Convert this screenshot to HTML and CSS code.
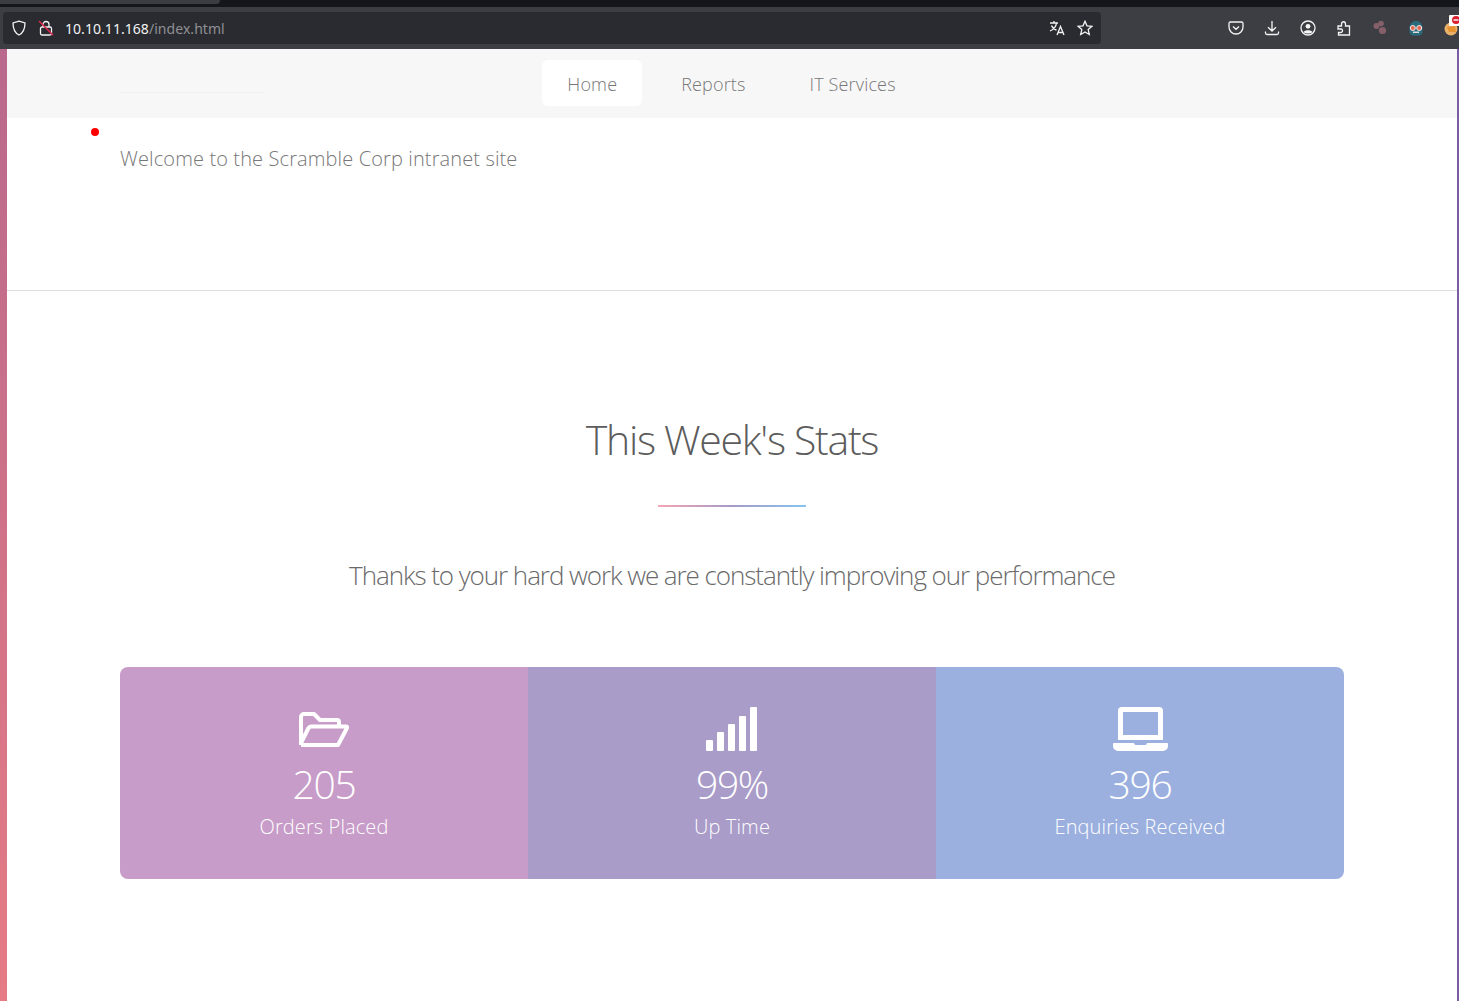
FILE: index.html
```html
<!DOCTYPE html>
<html lang="en">
<head>
  <meta charset="UTF-8">
  <title>Scramble Corp Intranet</title>
  <link rel="stylesheet" href="styles.css">
</head>
<body>
  <!-- Browser toolbar -->
  <div class="tabstrip"><div class="tab-edge"></div></div>
  <div class="toolbar">
    <div class="urlbar">
      <svg class="ico shield" viewBox="0 0 16 16"><path d="M8 1.2 L14 3 C14 9 12.5 12.8 8 15 C3.500 12.800 2 9 2 3 Z"/></svg>
      <svg class="ico lock" viewBox="0 0 16 16">
        <rect x="2.500" y="7" width="11" height="8" rx="1.500"/>
        <path d="M5 7 V4.500 a3 3 0 0 1 6 0 V7"/>
        <path class="slash" d="M1 1 L15 15"/>
      </svg>
      <span class="url"><span class="host">10.10.11.168</span>/index.html</span>
      <div class="url-actions">
        <svg class="ico" viewBox="0 0 16 16">
          <path d="M1 3 H9 M5 1 V3 M7.500 3 C7 7 4.500 9.500 1 11 M2.500 5.500 C3.500 8 5.500 9.500 7.500 10"/>
          <path d="M8 15 L11.500 6.500 L15 15 M9.200 12.500 H13.800"/>
        </svg>
        <svg class="ico star" viewBox="0 0 16 16"><path d="M8 1.300 L10 5.800 L14.900 6.300 L11.200 9.600 L12.300 14.500 L8 12 L3.700 14.500 L4.800 9.600 L1.100 6.300 L6 5.800 Z"/></svg>
      </div>
    </div>
    <div class="tools">
      <svg class="ico" viewBox="0 0 16 16"><path d="M2.500 2 H13.500 a1.500 1.500 0 0 1 1.500 1.500 V7 a7 7 0 0 1 -14 0 V3.500 A1.500 1.500 0 0 1 2.500 2 Z M5 6.500 L8 9.300 L11 6.500"/></svg>
      <svg class="ico" viewBox="0 0 16 16"><path d="M8 1 V11 M4 7.300 L8 11 L12 7.300 M1.500 11.500 V13 a1.500 1.500 0 0 0 1.500 1.500 H13 a1.500 1.500 0 0 0 1.500 -1.500 V11.500"/></svg>
      <svg class="ico" viewBox="0 0 16 16"><circle cx="8" cy="8" r="7"/><circle class="solid" cx="8" cy="6.300" r="2.400"/><path class="solid" d="M3.500 12 C5 9.800 11 9.800 12.500 12 C10.500 14 5.500 14 3.500 12 Z"/></svg>
      <svg class="ico" viewBox="0 0 16 16"><path d="M2 6 H5.500 V4 C5.500 1 9.500 1 9.500 4 V6 H13.500 V15 H2.500 V12.500 H5 C7 12.500 7 9 5 9 H2 Z"/></svg>
      <svg class="ext blobs" viewBox="0 0 16 16"><circle cx="4.500" cy="6" r="3"/><circle cx="9" cy="3.500" r="2.800"/><circle cx="10.500" cy="10.500" r="3.600"/></svg>
      <svg class="ext" viewBox="0 0 16 16">
        <path class="mask" d="M1.500 8 C1.500 -1.500 14.500 -1.500 14.500 8 V13 L12 15.500 H4 L1.500 13 Z"/>
        <circle class="goggle" cx="4.800" cy="8" r="2.500"/><circle class="goggle" cx="11.200" cy="8" r="2.500"/>
        <rect class="mouth" x="5" y="11.500" width="6" height="1.500"/>
      </svg>
      <svg class="ext fox" viewBox="0 0 16 16">
        <circle class="fox-body" cx="7" cy="9" r="6.500"/>
        <path class="fox-face" d="M3 7 L11 6 L12 12 L5 12 Z"/>
        <rect class="badge" x="5" y="-5" width="12" height="11" rx="1"/>
        <circle class="badge-stop" cx="12" cy="0" r="4"/>
        <rect class="badge" x="9.500" y="-0.700" width="5" height="1.400"/>
      </svg>
    </div>
  </div>

  <div class="viewport">
    <div class="page">
      <nav class="navbar">
        <div class="logo-broken"></div>
        <ul class="nav-links">
          <li class="active">Home</li>
          <li>Reports</li>
          <li>IT Services</li>
        </ul>
      </nav>

      <section class="intro">
        <span class="red-dot"></span>
        <p>Welcome to the Scramble Corp intranet site</p>
      </section>

      <section class="stats">
        <h2>This Week's Stats</h2>
        <div class="divider"></div>
        <p class="lead">Thanks to your hard work we are constantly improving our performance</p>
        <div class="cards">
          <div class="card card-pink">
            <svg class="card-icon" viewBox="0 0 52 36"><path class="line" d="M3 33 V5 a3 3 0 0 1 3 -3 H16 L22 8 H39 a2 2 0 0 1 2 2 V14 M3 33 H40 L49 16 a1 1 0 0 0 -1 -1.500 H13 a3 3 0 0 0 -2.500 1.500 L3 31"/></svg>
            <div class="num">205</div>
            <div class="label">Orders Placed</div>
          </div>
          <div class="card card-purple">
            <svg class="card-icon" viewBox="0 0 52 44"><rect x="0" y="33" width="7" height="11" rx="1"/><rect x="11" y="25" width="7" height="19" rx="1"/><rect x="22" y="17" width="7" height="27" rx="1"/><rect x="33" y="9" width="7" height="35" rx="1"/><rect x="44" y="0" width="7" height="44" rx="1"/></svg>
            <div class="num">99%</div>
            <div class="label">Up Time</div>
          </div>
          <div class="card card-blue">
            <svg class="card-icon" viewBox="0 0 55 44"><path fill-rule="evenodd" d="M9 0 H46 a4 4 0 0 1 4 4 V33 H5 V4 a4 4 0 0 1 4 -4 Z M10 5 V28 H45 V5 Z"/><path d="M1 36 H21 a2 2 0 0 0 2 2 H32 a2 2 0 0 0 2 -2 H54 a1 1 0 0 1 1 1 V39 a5 5 0 0 1 -5 5 H5 a5 5 0 0 1 -5 -5 V37 a1 1 0 0 1 1 -1 Z"/></svg>
            <div class="num">396</div>
            <div class="label">Enquiries Received</div>
          </div>
        </div>
      </section>
    </div>
  </div>
</body>
</html>
```

FILE: styles.css
```css
html, body {
  margin: 0;
  padding: 0;
}
body {
  width: 1459px;
  height: 1001px;
  overflow: hidden;
  background: #fff;
  font-family: "Open Sans", sans-serif;
  display: flex;
  flex-direction: column;
}

/* browser chrome */
.tabstrip {
  height: 7px;
  background: #15161c;
}
.tab-edge {
  width: 220px;
  height: 4px;
  background: #3c3d43;
  border-radius: 0 0 4px 0;
}
.toolbar {
  height: 42px;
  background: #3d3e44;
  display: flex;
  align-items: center;
  padding: 0 0 0 3px;
  box-sizing: border-box;
  overflow: hidden;
}
.urlbar {
  flex: none;
  width: 1098px;
  height: 32px;
  background: #2a2b30;
  border-radius: 4px;
  display: flex;
  align-items: center;
  box-sizing: border-box;
  padding: 0 8px 0 8px;
}
.ico {
  width: 16px;
  height: 16px;
  fill: none;
  stroke: #f4f4f5;
  stroke-width: 1.3;
  flex: none;
}
.ico .solid {
  fill: #f4f4f5;
  stroke: none;
}
.ico .slash {
  stroke: #e0254c;
  stroke-width: 1.500;
}
.lock {
  margin-left: 11px;
}
.url {
  margin-left: 11px;
  font-family: "Noto Sans", sans-serif;
  font-size: 14px;
  letter-spacing: 0.05px;
  color: #8f8f94;
}
.host {
  color: #f2f2f3;
}
.url-actions {
  margin-left: auto;
  display: flex;
  gap: 12px;
}
.tools {
  flex: none;
  margin-left: 127px;
  display: flex;
  align-items: center;
  gap: 20px;
}
.ext {
  width: 16px;
  height: 16px;
  flex: none;
  overflow: visible;
}
.blobs {
  filter: blur(0.5px);
}
.blobs circle {
  fill: #85606a;
}
.ext .mask {
  fill: #2b6c7c;
}
.ext .goggle {
  fill: #e8674f;
  stroke: #eee;
}
.ext .mouth {
  fill: #ddd;
}
.ext .fox-body {
  fill: #e8b26a;
}
.fox-face {
  fill: #e8912f;
}
.ext .badge-stop {
  fill: #d8202f;
}
.badge {
  fill: #fff;
}

/* page */
.viewport {
  flex: 1;
  display: flex;
  background: #fff;
  background-image: linear-gradient(180deg, #b9698c, #e67b85);
  padding: 0 2px 0 7px;
  position: relative;
  min-height: 0;
}
.viewport::after {
  content: "";
  position: absolute;
  top: 0;
  bottom: 0;
  right: 0;
  width: 2px;
  background: #7b5da6;
}
.page {
  flex: 1;
  background: #fff;
  color: #666;
  font-weight: 300;
}
.navbar {
  height: 69px;
  background: #f7f7f7;
  position: relative;
  display: flex;
  justify-content: center;
}
.logo-broken {
  position: absolute;
  left: 113px;
  top: 43px;
  width: 145px;
  height: 1px;
  background: #f0f1f2;
}
.nav-links {
  list-style: none;
  margin: 11px 0 0 -1px;
  padding: 0;
  display: flex;
  height: 46px;
  font-size: 18px;
  letter-spacing: 0.15px;
  color: #777;
}
.nav-links li {
  padding: 0 25px;
  margin-right: 14px;
  line-height: 48px;
  border-radius: 6px;
}
.nav-links li:last-child {
  margin-right: 0;
}
.nav-links .active {
  background: #fff;
}
.intro {
  height: 172px;
  border-bottom: 1px solid #ddd;
  position: relative;
  padding-left: 113px;
}
.intro p {
  margin: 0;
  padding-top: 26px;
  font-size: 20px;
  line-height: 30px;
  letter-spacing: 0.12px;
  color: #777;
}
.red-dot {
  position: absolute;
  left: 84px;
  top: 10px;
  width: 8px;
  height: 8px;
  border-radius: 50%;
  background: #f00;
}
.stats {
  text-align: center;
}
.stats h2 {
  margin: 117px 0 0;
  font-size: 41px;
  line-height: 62px;
  font-weight: 300;
  letter-spacing: -1.300px;
  color: #5c5c5c;
}
.divider {
  width: 148px;
  height: 2px;
  margin: 35px auto 0;
  background: linear-gradient(90deg, #f4a5b4, #a69ac6, #85c5ee);
}
.lead {
  margin: 48px 0 0;
  font-size: 26px;
  line-height: 40px;
  letter-spacing: -1.060px;
  color: #6a6a6a;
}
.cards {
  width: 1224px;
  height: 212px;
  margin: 72px auto 0;
  display: grid;
  grid-template-columns: repeat(3, 1fr);
  border-radius: 8px;
  overflow: hidden;
  color: #fff;
}
.card {
  display: flex;
  flex-direction: column;
  align-items: center;
}
.card-pink {
  background: #c79cc9;
}
.card-purple {
  background: #a99cc8;
}
.card-blue {
  background: #9bb0df;
}
.card-icon {
  height: 44px;
  margin-top: 40px;
  fill: #fff;
}
.card-pink .card-icon {
  height: 36px;
  margin: 45px 0 3px;
}
.card-icon .line {
  fill: none;
  stroke: #fff;
  stroke-width: 4;
  stroke-linejoin: round;
}
.num {
  font-size: 39px;
  line-height: 50px;
  margin-top: 8px;
  letter-spacing: -1.300px;
}
.label {
  font-size: 20px;
  line-height: 30px;
  margin-top: 3px;
  letter-spacing: 0.12px;
}
```
